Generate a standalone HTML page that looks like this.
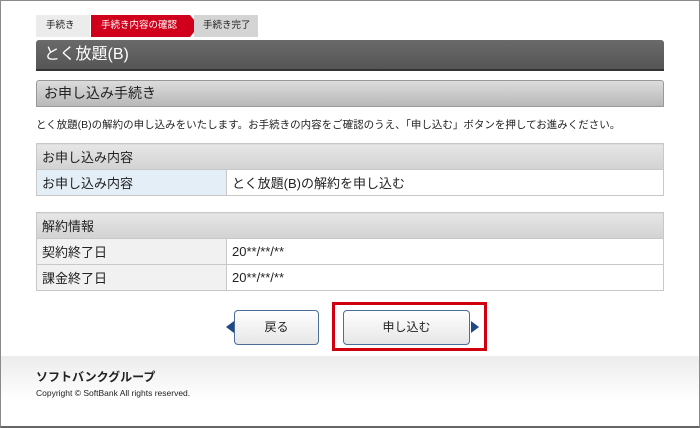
<!DOCTYPE html><html><head><meta charset="utf-8"><style>
*{margin:0;padding:0;box-sizing:border-box}
body{width:700px;height:428px;font-family:"Liberation Sans","Noto Sans CJK JP",sans-serif;background:#fff;position:relative;overflow:hidden;color:#222}
.frame{position:absolute;left:0;top:0;width:700px;height:428px;border:1px solid #8a8a8a;border-bottom:2px solid #666}
.a{position:absolute}
.step{position:absolute;top:15px;height:22px;font-size:9.5px;line-height:22px}
.tbl{position:absolute;left:36px;width:628px;border-collapse:collapse;font-size:13px}
.tbl td{border:1px solid #c8c8c8;height:26px;padding-left:5px}
.h{background:linear-gradient(#e6e6e6,#d2d2d2)}
.lab{background:#f1f1f1;width:190px}
.lab2{background:#e4eef7;width:190px}
.btn{position:absolute;top:310px;height:35px;border:1px solid #4a6d9a;border-radius:4px;background:linear-gradient(#fff,#e6e6e6);font-size:12px;text-align:center;line-height:33px}
</style></head><body>
<div class="frame"></div>
<div class="step" style="left:36px;width:54px;background:#ececec;padding-left:10px">手続き</div>
<div class="a" style="left:80px;top:15px;width:0;height:0;border-top:11px solid transparent;border-bottom:11px solid transparent;border-left:10px solid #ececec"></div>
<div class="step" style="left:91px;width:99px;background:#d0001c;color:#fff;padding-left:10px">手続き内容の確認</div>
<div class="a" style="left:190px;top:15px;border-top:11px solid transparent;border-bottom:11px solid transparent;border-left:9px solid #d0001c"></div>
<div class="step" style="left:194px;width:64px;background:#d4d4d4;padding-left:9px">手続き完了</div>
<div class="a" style="left:36px;top:40px;width:628px;height:31px;background:linear-gradient(#6a6a6a,#555);border-bottom:2px solid #333;border-radius:3px 3px 0 0;color:#fff;font-size:16px;line-height:29px;padding-left:8px">とく放題(B)</div>
<div class="a" style="left:36px;top:80px;width:628px;height:27px;background:linear-gradient(#dcdcdc,#b8b8b8);border:1px solid #999;border-radius:3px 3px 0 0;font-size:14px;line-height:25px;padding-left:7px">お申し込み手続き</div>
<div class="a" style="left:36px;top:117px;font-size:10.5px;white-space:nowrap">とく放題(B)の解約の申し込みをいたします。お手続きの内容をご確認のうえ、「申し込む」ボタンを押してお進みください。</div>
<table class="tbl" style="top:143px"><tr><td class="h" colspan="2">お申し込み内容</td></tr><tr><td class="lab2">お申し込み内容</td><td>とく放題(B)の解約を申し込む</td></tr></table>
<table class="tbl" style="top:212px"><tr><td class="h" colspan="2">解約情報</td></tr><tr><td class="lab">契約終了日</td><td>20**/**/**</td></tr><tr><td class="lab">課金終了日</td><td>20**/**/**</td></tr></table>
<div class="a" style="left:226px;top:321px;border-top:6px solid transparent;border-bottom:6px solid transparent;border-right:8px solid #1e4a86"></div>
<div class="btn" style="left:234px;width:85px">戻る</div>
<div class="a" style="left:332px;top:302px;width:155px;height:49px;border:3px solid #d0000f"></div>
<div class="btn" style="left:343px;width:127px">申し込む</div>
<div class="a" style="left:471px;top:321px;border-top:6px solid transparent;border-bottom:6px solid transparent;border-left:8px solid #1e4a86"></div>
<div class="a" style="left:1px;top:356px;width:698px;height:44px;background:linear-gradient(#ececec,#fff)"></div>
<div class="a" style="left:36px;top:368px;font-size:12px;font-weight:bold">ソフトバンクグループ</div>
<div class="a" style="left:36px;top:388px;font-size:8.5px">Copyright © SoftBank All rights reserved.</div>
</body></html>
